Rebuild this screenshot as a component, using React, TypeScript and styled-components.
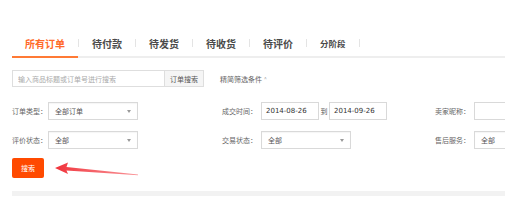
import React from "react";
import styled, { createGlobalStyle } from "styled-components";

const GlobalStyle = createGlobalStyle`
  html, body {
    margin: 0;
    padding: 0;
    background: #fff;
    overflow: hidden;
  }
  body {
    font-family: "Noto Sans CJK SC", "Liberation Sans", sans-serif;
    color: #555;
  }
`;

const tabs = ["所有订单", "待付款", "待发货", "待收货", "待评价"];

const App = () => {
  return (
    <Page>
      <GlobalStyle />
      <TabBar>
        {tabs.map((t, i) => (
          <React.Fragment key={t}>
            <Tab active={i === 0}>{t}</Tab>
            <Sep />
          </React.Fragment>
        ))}
        <Tab small>分阶段</Tab>
        <Sep />
      </TabBar>

      <SearchRow>
        <SearchInput placeholder="输入商品标题或订单号进行搜索" />
        <SearchButton>订单搜索</SearchButton>
        <Toggle>
          精简筛选条件 <Caret>^</Caret>
        </Toggle>
      </SearchRow>

      <FilterGrid>
        <Label>订单类型：</Label>
        <Select>
          <span>全部订单</span>
          <Tri />
        </Select>
        <Label right>成交时间：</Label>
        <DateRange>
          <DateBox>2014-08-26</DateBox>
          <To>到</To>
          <DateBox>2014-09-26</DateBox>
        </DateRange>
        <Label right>卖家昵称：</Label>
        <TextBox />

        <Label>评价状态：</Label>
        <Select>
          <span>全部</span>
          <Tri />
        </Select>
        <Label right>交易状态：</Label>
        <Select>
          <span>全部</span>
          <Tri />
        </Select>
        <Label right>售后服务：</Label>
        <Select>
          <span>全部</span>
          <Tri />
        </Select>
      </FilterGrid>

      <ButtonRow>
        <GoButton>搜索</GoButton>
        <Arrow width="86" height="20" viewBox="0 0 86 20">
          <defs>
            <linearGradient id="ar" x1="0" x2="1" y1="0" y2="0">
              <stop offset="0" stopColor="#f0323a" />
              <stop offset="1" stopColor="#f7646a" stopOpacity="0.7" />
            </linearGradient>
          </defs>
          <polygon
            points="1,9 14,3.5 12.5,8 84,15.4 84,16.2 12.5,11.4 14,15 "
            fill="url(#ar)"
          />
        </Arrow>
      </ButtonRow>

      <BottomBar />
    </Page>
  );
};

export default App;

const Page = styled.div`
  width: 505px;
  height: 201px;
  padding: 30px 0 0 12px;
  box-sizing: border-box;
  overflow: hidden;
`;

const TabBar = styled.div`
  display: flex;
  align-items: center;
  height: 26px;
  border-bottom: 2px solid #eeeeee;
`;

const Tab = styled.div<{ active?: boolean; small?: boolean }>`
  height: 28px;
  box-sizing: border-box;
  padding: 0 13px;
  margin-bottom: -2px;
  display: flex;
  align-items: center;
  font-size: ${(p) => (p.small ? "8.5px" : "10px")};
  font-weight: bold;
  color: ${(p) => (p.active ? "#ff6a2a" : "#4a4a4a")};
  border-bottom: 2px solid ${(p) => (p.active ? "#ff7a35" : "transparent")};
`;

const Sep = styled.div`
  width: 1px;
  height: 8px;
  background: #e4e4e4;
`;

const SearchRow = styled.div`
  display: flex;
  align-items: center;
  margin-top: 12px;
  height: 17px;
`;

const SearchInput = styled.input`
  width: 152px;
  height: 17px;
  box-sizing: border-box;
  border: 1px solid #dedede;
  border-right: none;
  padding: 0 5px;
  font-family: inherit;
  font-size: 7px;
  outline: none;
  &::placeholder {
    color: #aaa;
  }
`;

const SearchButton = styled.div`
  width: 40px;
  height: 17px;
  box-sizing: border-box;
  border: 1px solid #dedede;
  background: #f5f5f5;
  color: #555;
  font-size: 7px;
  display: flex;
  align-items: center;
  justify-content: center;
`;

const Toggle = styled.div`
  margin-left: 16px;
  font-size: 7px;
  color: #666;
  display: flex;
  align-items: center;
`;

const Caret = styled.span`
  margin-left: 2px;
  font-size: 5px;
  color: #999;
`;

const FilterGrid = styled.div`
  display: grid;
  grid-template-columns: 36px 90px 123px 140px 73px 60px;
  grid-auto-rows: 18px;
  row-gap: 11px;
  margin-top: 15px;
  align-items: center;
`;

const Label = styled.div<{ right?: boolean }>`
  font-size: 7px;
  color: #666;
  text-align: ${(p) => (p.right ? "right" : "left")};
  padding-right: ${(p) => (p.right ? "4px" : "0")};
  white-space: nowrap;
`;

const Select = styled.div`
  width: 90px;
  height: 18px;
  box-sizing: border-box;
  border: 1px solid #d9d9d9;
  display: flex;
  align-items: center;
  justify-content: space-between;
  padding: 0 6px;
  font-size: 7px;
  color: #555;
  background: #fff;
  box-shadow: inset 0 1px 1px rgba(0, 0, 0, 0.04);
`;

const Tri = styled.span`
  width: 0;
  height: 0;
  border-left: 2.5px solid transparent;
  border-right: 2.5px solid transparent;
  border-top: 3px solid #999;
`;

const DateRange = styled.div`
  display: flex;
  align-items: center;
`;

const DateBox = styled.div`
  width: 58px;
  height: 18px;
  box-sizing: border-box;
  border: 1px solid #d9d9d9;
  padding-left: 4px;
  display: flex;
  align-items: center;
  font-family: "DejaVu Sans", sans-serif;
  font-size: 7px;
  color: #333;
`;

const To = styled.span`
  font-size: 7px;
  color: #555;
  width: 10px;
  text-align: center;
`;

const TextBox = styled.div`
  width: 60px;
  height: 18px;
  box-sizing: border-box;
  border: 1px solid #d9d9d9;
  background: #fff;
`;

const ButtonRow = styled.div`
  display: flex;
  align-items: center;
  margin-top: 9px;
  height: 20px;
`;

const GoButton = styled.div`
  width: 32px;
  height: 20px;
  border-radius: 2px;
  background: #ff4a00;
  color: #fff;
  font-size: 7px;
  display: flex;
  align-items: center;
  justify-content: center;
`;

const Arrow = styled.svg`
  margin-left: 10px;
  margin-top: 1px;
`;

const BottomBar = styled.div`
  margin-top: 13px;
  height: 5px;
  background: #f2f2f2;
`;
